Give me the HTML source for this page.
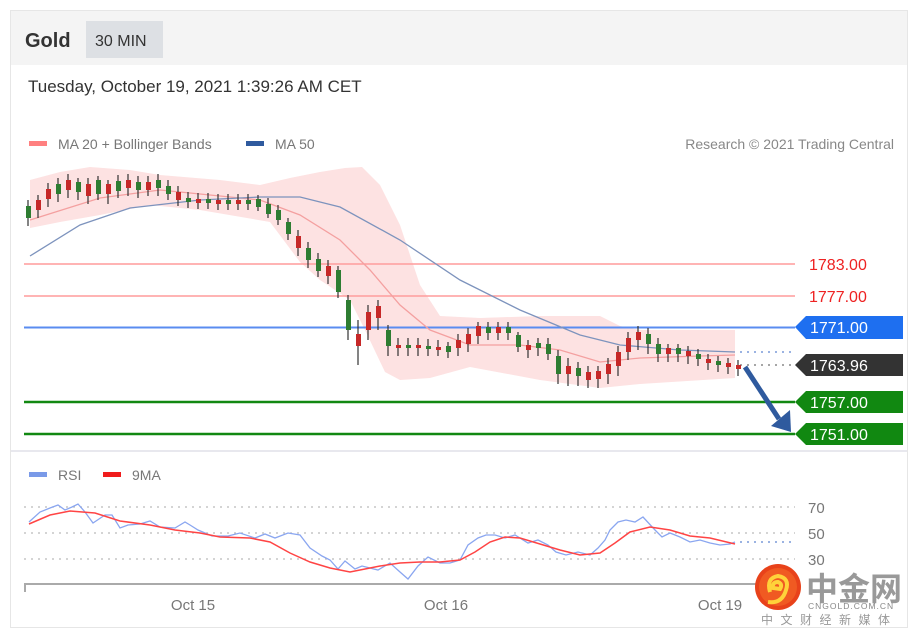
<!DOCTYPE html>
<html><head><meta charset="utf-8"><style>
body{margin:0;background:#fff;width:913px;height:636px;overflow:hidden;font-family:"Liberation Sans",sans-serif}
</style></head><body>
<svg width="913" height="636" viewBox="0 0 913 636" xmlns="http://www.w3.org/2000/svg" font-family="Liberation Sans, sans-serif">
<rect x="10.5" y="10.5" width="897" height="617" fill="#fff" stroke="#e6e6e6"/>
<rect x="11" y="11" width="896" height="54" fill="#f4f4f4"/>
<text x="25" y="47" font-size="20" font-weight="bold" fill="#333">Gold</text>
<rect x="86" y="21" width="77" height="37" fill="#dde0e4"/>
<text x="95" y="46" font-size="16" fill="#333">30 MIN</text>
<text x="28" y="92" font-size="17" fill="#333">Tuesday, October 19, 2021 1:39:26 AM CET</text>
<rect x="29" y="141" width="18" height="5" fill="#ff8080"/>
<text x="58" y="149" font-size="14" fill="#777">MA 20 + Bollinger Bands</text>
<rect x="246" y="141" width="18" height="5" fill="#2f5a9e"/>
<text x="275" y="149" font-size="14" fill="#777">MA 50</text>
<text x="894" y="149" font-size="14" fill="#888" text-anchor="end">Research © 2021 Trading Central</text>

<path d="M30 180 L60 172 L90 167 L130 170 L160 175 L220 180 L260 185 L290 178 L320 172 L345 168 L362 167 L380 185 L400 225 L420 285 L440 316 L480 318 L540 316 L600 316 L620 326 L640 330 L735 330 L735 378 L640 384 L600 388 L540 380 L470 367 L430 378 L400 380 L385 372 L365 330 L350 300 L320 280 L300 262 L270 222 L200 210 L150 205 L100 215 L60 222 L30 228 Z" fill="#fde2e2"/>
<line x1="24" y1="264" x2="795" y2="264" stroke="#ff9c9c" stroke-width="1.5"/>
<line x1="24" y1="296" x2="795" y2="296" stroke="#ff9c9c" stroke-width="1.5"/>
<line x1="24" y1="327.5" x2="795" y2="327.5" stroke="#5a8cf0" stroke-width="2"/>
<line x1="24" y1="402" x2="795" y2="402" stroke="#118811" stroke-width="2.5"/>
<line x1="24" y1="434" x2="795" y2="434" stroke="#118811" stroke-width="2.5"/>
<line x1="740" y1="352" x2="795" y2="352" stroke="#7a9ad8" stroke-width="1.5" stroke-dasharray="2 5"/>
<line x1="740" y1="365" x2="795" y2="365" stroke="#888" stroke-width="1.5" stroke-dasharray="2 5"/>
<path d="M30 220 L100 198 L160 190 L260 200 L300 215 L340 240 L370 270 L400 305 L430 330 L470 345 L520 345 L560 350 L600 362 L640 358 L700 356 L735 355" fill="none" stroke="#f4a0a0" stroke-width="1.3"/>
<path d="M30 256 L80 225 L130 208 L200 200 L260 197 L300 197 L340 207 L400 240 L460 280 L520 310 L580 335 L620 345 L680 350 L735 352" fill="none" stroke="#7d93bd" stroke-width="1.3"/>
<g stroke="#333" stroke-width="1.2">
<path d="M28 200V226M38 195V218M48 183V207M58 178V202M68 174V198M78 178V200M88 178V204M98 176V200M108 180V204M118 175V198M128 174V196M138 176V198M148 176V196M158 174V196M168 180V200M178 186V206M188 192V208M198 193V209M208 193V209M218 194V210M228 194V210M238 194V210M248 194V210M258 195V211M268 198V218M278 205V225M288 218V240M298 230V256M308 242V268M318 253V277M328 260V284M338 266V298M348 295V340M358 320V365M368 305V340M378 300V330M388 325V356M398 338V356M408 338V356M418 338V356M428 339V356M438 340V356M448 342V358M458 334V356M468 328V352M478 322V344M488 322V340M498 322V340M508 322V340M518 332V352M528 340V358M538 338V356M548 338V360M558 350V384M568 358V386M578 362V386M588 366V388M598 366V388M608 358V384M618 346V376M628 332V360M638 326V350M648 328V354M658 338V362M668 344V362M678 344V362M688 346V364M698 349V366M708 354V370M718 356V372M728 358V374M738 360V376"/>
</g>
<g stroke="none">
<rect x="26" y="206" width="5" height="12" fill="#2e7d32"/><rect x="36" y="200" width="5" height="10" fill="#c62828"/><rect x="46" y="189" width="5" height="10" fill="#c62828"/><rect x="56" y="184" width="5" height="10" fill="#2e7d32"/><rect x="66" y="180" width="5" height="10" fill="#c62828"/><rect x="76" y="182" width="5" height="10" fill="#2e7d32"/><rect x="86" y="184" width="5" height="12" fill="#c62828"/><rect x="96" y="180" width="5" height="14" fill="#2e7d32"/><rect x="106" y="184" width="5" height="10" fill="#c62828"/><rect x="116" y="181" width="5" height="10" fill="#2e7d32"/><rect x="126" y="180" width="5" height="8" fill="#c62828"/><rect x="136" y="182" width="5" height="8" fill="#2e7d32"/><rect x="146" y="182" width="5" height="8" fill="#c62828"/><rect x="156" y="180" width="5" height="8" fill="#2e7d32"/><rect x="166" y="186" width="5" height="8" fill="#2e7d32"/><rect x="176" y="192" width="5" height="8" fill="#c62828"/><rect x="186" y="198" width="5" height="4" fill="#2e7d32"/><rect x="196" y="199" width="5" height="4" fill="#c62828"/><rect x="206" y="199" width="5" height="4" fill="#2e7d32"/><rect x="216" y="200" width="5" height="4" fill="#c62828"/><rect x="226" y="200" width="5" height="4" fill="#2e7d32"/><rect x="236" y="200" width="5" height="4" fill="#c62828"/><rect x="246" y="200" width="5" height="4" fill="#2e7d32"/><rect x="256" y="199" width="5" height="8" fill="#2e7d32"/><rect x="266" y="204" width="5" height="10" fill="#2e7d32"/><rect x="276" y="210" width="5" height="10" fill="#2e7d32"/><rect x="286" y="222" width="5" height="12" fill="#2e7d32"/><rect x="296" y="236" width="5" height="12" fill="#c62828"/><rect x="306" y="248" width="5" height="12" fill="#2e7d32"/><rect x="316" y="259" width="5" height="12" fill="#2e7d32"/><rect x="326" y="266" width="5" height="10" fill="#c62828"/><rect x="336" y="270" width="5" height="22" fill="#2e7d32"/><rect x="346" y="300" width="5" height="30" fill="#2e7d32"/><rect x="356" y="334" width="5" height="12" fill="#c62828"/><rect x="366" y="312" width="5" height="18" fill="#c62828"/><rect x="376" y="306" width="5" height="12" fill="#c62828"/><rect x="386" y="330" width="5" height="16" fill="#2e7d32"/><rect x="396" y="345" width="5" height="3" fill="#c62828"/><rect x="406" y="345" width="5" height="3" fill="#2e7d32"/><rect x="416" y="345" width="5" height="3" fill="#c62828"/><rect x="426" y="346" width="5" height="3" fill="#2e7d32"/><rect x="436" y="347" width="5" height="3" fill="#c62828"/><rect x="446" y="346" width="5" height="6" fill="#2e7d32"/><rect x="456" y="340" width="5" height="8" fill="#c62828"/><rect x="466" y="334" width="5" height="10" fill="#c62828"/><rect x="476" y="326" width="5" height="10" fill="#c62828"/><rect x="486" y="327" width="5" height="6" fill="#2e7d32"/><rect x="496" y="327" width="5" height="6" fill="#c62828"/><rect x="506" y="327" width="5" height="6" fill="#2e7d32"/><rect x="516" y="335" width="5" height="12" fill="#2e7d32"/><rect x="526" y="345" width="5" height="5" fill="#c62828"/><rect x="536" y="343" width="5" height="5" fill="#2e7d32"/><rect x="546" y="344" width="5" height="10" fill="#2e7d32"/><rect x="556" y="356" width="5" height="18" fill="#2e7d32"/><rect x="566" y="366" width="5" height="8" fill="#c62828"/><rect x="576" y="368" width="5" height="8" fill="#2e7d32"/><rect x="586" y="372" width="5" height="8" fill="#c62828"/><rect x="596" y="371" width="5" height="8" fill="#c62828"/><rect x="606" y="364" width="5" height="10" fill="#c62828"/><rect x="616" y="352" width="5" height="14" fill="#c62828"/><rect x="626" y="338" width="5" height="14" fill="#c62828"/><rect x="636" y="332" width="5" height="8" fill="#c62828"/><rect x="646" y="334" width="5" height="10" fill="#2e7d32"/><rect x="656" y="344" width="5" height="10" fill="#2e7d32"/><rect x="666" y="348" width="5" height="6" fill="#c62828"/><rect x="676" y="348" width="5" height="6" fill="#2e7d32"/><rect x="686" y="351" width="5" height="5" fill="#c62828"/><rect x="696" y="354" width="5" height="5" fill="#2e7d32"/><rect x="706" y="359" width="5" height="4" fill="#c62828"/><rect x="716" y="361" width="5" height="4" fill="#2e7d32"/><rect x="726" y="363" width="5" height="4" fill="#c62828"/><rect x="736" y="365" width="5" height="4" fill="#c62828"/>
</g>
<line x1="745" y1="367" x2="779" y2="419" stroke="#2f5a9e" stroke-width="5"/>
<polygon points="771,426 791,432 790,410" fill="#2f5a9e"/>

<polygon points="795,327 806,316 903,316 903,339 806,339" fill="#1e6ff0"/>
<text x="810" y="333" font-size="16" fill="#fff">1771.00</text>
<polygon points="795,365 806,354 903,354 903,376 806,376" fill="#333"/>
<text x="810" y="371" font-size="16" fill="#fff">1763.96</text>
<polygon points="795,402 806,391 903,391 903,413 806,413" fill="#118811"/>
<text x="810" y="408" font-size="16" fill="#fff">1757.00</text>
<polygon points="795,434 806,423 903,423 903,445 806,445" fill="#118811"/>
<text x="810" y="440" font-size="16" fill="#fff">1751.00</text>
<text x="809" y="270" font-size="16" fill="#ee2222">1783.00</text>
<text x="809" y="302" font-size="16" fill="#ee2222">1777.00</text>

<line x1="11" y1="451" x2="907" y2="451" stroke="#e8e8ee" stroke-width="2"/>
<rect x="29" y="472" width="18" height="5" fill="#7a9ae8"/>
<text x="58" y="480" font-size="14" fill="#777">RSI</text>
<rect x="103" y="472" width="18" height="5" fill="#f01c1c"/>
<text x="132" y="480" font-size="14" fill="#777">9MA</text>
<g stroke="#bbb" stroke-width="1.2" stroke-dasharray="2 5">
<line x1="24" y1="507" x2="795" y2="507"/><line x1="24" y1="533" x2="795" y2="533"/><line x1="24" y1="559" x2="795" y2="559"/>
</g>
<line x1="740" y1="542" x2="795" y2="542" stroke="#7a9ad8" stroke-width="1.5" stroke-dasharray="2 5"/>
<text x="808" y="513" font-size="15" fill="#777">70</text>
<text x="808" y="539" font-size="15" fill="#777">50</text>
<text x="808" y="565" font-size="15" fill="#777">30</text>
<path d="M29 522 L40 512 L50 508 L58 505 L65 510 L72 507 L78 504 L85 512 L93 523 L105 515 L112 515 L120 528 L128 525 L140 524 L150 521 L160 527 L175 528 L185 522 L190 525 L198 530 L212 536 L228 536 L240 533 L255 538 L265 534 L275 538 L288 533 L300 535 L310 548 L322 556 L330 560 L338 569 L345 561 L355 569 L362 566 L378 570 L390 563 L400 572 L408 579 L418 566 L428 557 L440 563 L450 563 L460 560 L468 545 L478 538 L486 535 L495 535 L505 538 L515 535 L528 543 L538 540 L548 545 L556 552 L566 555 L578 552 L590 555 L598 548 L605 540 L610 530 L618 522 L626 520 L635 522 L643 517 L655 530 L662 537 L670 533 L680 537 L690 542 L700 540 L710 543 L720 545 L730 544 L735 542" fill="none" stroke="#8aa6f0" stroke-width="1.3"/>
<path d="M29 524 L50 515 L70 511 L95 513 L120 521 L150 525 L175 530 L200 533 L220 537 L250 538 L270 542 L290 553 L310 562 L330 568 L350 572 L365 569 L380 566 L400 563 L420 562 L440 562 L460 560 L475 552 L490 542 L505 537 L520 538 L540 544 L560 550 L580 555 L600 553 L615 543 L630 532 L650 527 L670 530 L690 536 L710 538 L735 544" fill="none" stroke="#f44" stroke-width="1.5"/>
<path d="M25 592 V584 H780" fill="none" stroke="#aaa" stroke-width="2"/>
<text x="193" y="610" font-size="15" fill="#777" text-anchor="middle">Oct 15</text>
<text x="446" y="610" font-size="15" fill="#777" text-anchor="middle">Oct 16</text>
<text x="720" y="610" font-size="15" fill="#777" text-anchor="middle">Oct 19</text>

<circle cx="778" cy="587" r="23" fill="#e8421a"/>
<circle cx="778" cy="587" r="19" fill="#f05a22"/>
<path d="M770 592 Q766 578 778 576 Q790 578 786 590 Q782 604 768 602 M773 588 Q772 582 778 582 Q783 584 780 589 Z" fill="none" stroke="#ffd23a" stroke-width="4"/>
<text x="806" y="600" font-size="32" font-weight="bold" fill="#999" font-family="Noto Sans CJK SC, sans-serif">中金网</text>
<text x="808" y="609" font-size="8.5" fill="#888" letter-spacing="1">CNGOLD.COM.CN</text>
<text x="761" y="624" font-size="12" fill="#999" letter-spacing="7.5" font-family="Noto Sans CJK SC, sans-serif">中文财经新媒体</text>
</svg>
</body></html>
